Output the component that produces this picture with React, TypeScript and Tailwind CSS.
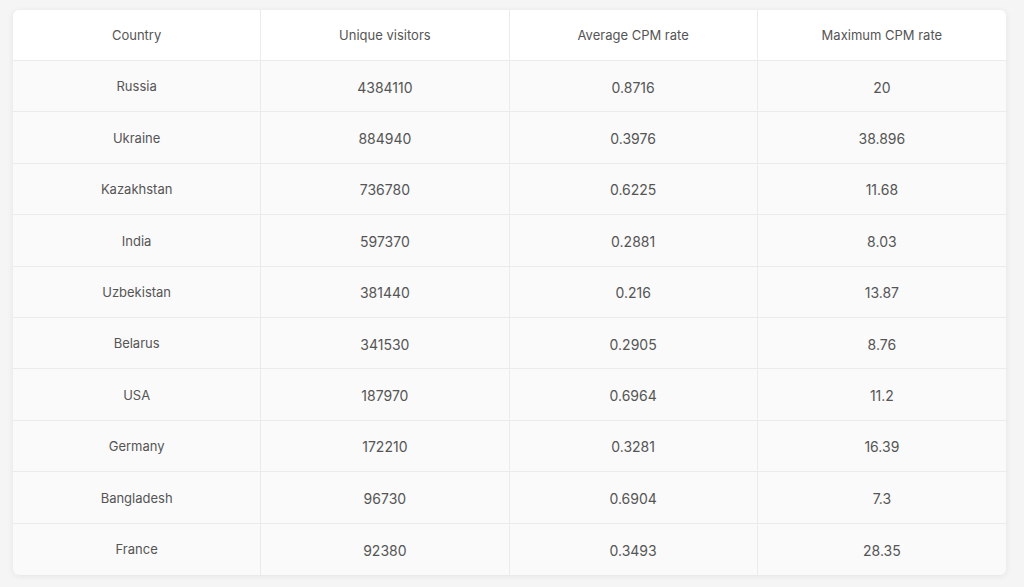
import React from 'react';

const rows: [string, string, string, string][] = [
    ['Russia', '4384110', '0.8716', '20'],
    ['Ukraine', '884940', '0.3976', '38.896'],
    ['Kazakhstan', '736780', '0.6225', '11.68'],
    ['India', '597370', '0.2881', '8.03'],
    ['Uzbekistan', '381440', '0.216', '13.87'],
    ['Belarus', '341530', '0.2905', '8.76'],
    ['USA', '187970', '0.6964', '11.2'],
    ['Germany', '172210', '0.3281', '16.39'],
    ['Bangladesh', '96730', '0.6904', '7.3'],
    ['France', '92380', '0.3493', '28.35'],
];

const headers = ['Country', 'Unique visitors', 'Average CPM rate', 'Maximum CPM rate'];

const App: React.FC = () => {
    return (
        <div className="w-[1024px] h-[587px] bg-[#f5f5f5] pt-[10px] pl-[13px] pr-[18px] font-[Inter,sans-serif] text-[13px] text-[#555]">
            <div className="bg-[#fafafa] rounded-md shadow-[0_1px_6px_rgba(0,0,0,0.08)] overflow-hidden">
                <div className="grid grid-cols-4 h-[51px] bg-white border-b border-[#ebebeb]">
                    {headers.map((h, i) => (
                        <div key={h} className={`flex items-center justify-center pt-[2px] ${i < 3 ? 'border-r border-[#ebebeb]' : ''}`}>
                            {h}
                        </div>
                    ))}
                </div>
                {rows.map((r, ri) => (
                    <div key={r[0]} className={`grid grid-cols-4 h-[51.4px] ${ri < rows.length - 1 ? 'border-b border-[#ebebeb]' : ''}`}>
                        {r.map((c, i) => (
                            <div key={i} className={`flex items-center justify-center pt-[2px] ${i < 3 ? 'border-r border-[#ebebeb]' : ''} ${i > 0 ? 'text-[14px]' : ''}`}>
                                {c}
                            </div>
                        ))}
                    </div>
                ))}
            </div>
        </div>
    );
};

export default App;
